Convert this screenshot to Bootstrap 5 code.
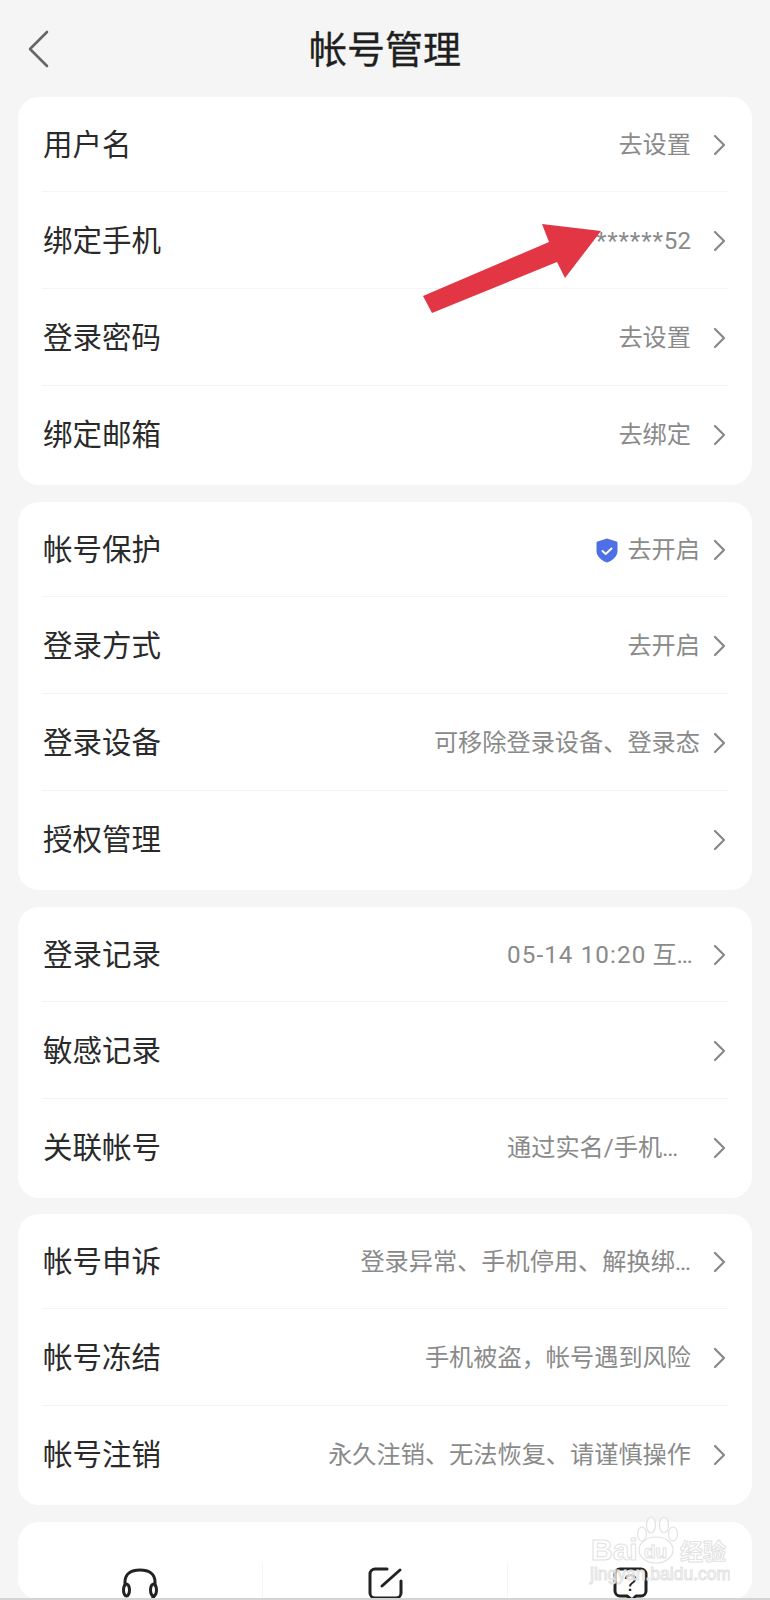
<!DOCTYPE html>
<html lang="zh-CN">
<head>
<meta charset="utf-8">
<title>帐号管理</title>
<link href="https://cdn.jsdelivr.net/npm/bootstrap@5.3.0/dist/css/bootstrap.min.css" rel="stylesheet">
<style>
html,body{height:1600px;overflow:hidden}
body{background:#f5f5f5;font-family:Roboto,"Noto Sans CJK SC",sans-serif;color:#2a2a2a;position:relative}
.top-bar{height:97px}
.back-slot{width:48px;padding-left:27px;box-sizing:content-box}
.page-title{font-size:38px;font-weight:400;color:#1f1f1f;line-height:1;padding-top:2px;-webkit-text-stroke:.3px #1f1f1f}
.panel{margin:0 18px 17px 18px;border-radius:21px;background:#fff}
.panel.tight{margin-bottom:16px}
.entry{margin:0 24px;padding:4px 0 0;height:97px;border-color:#f4f4f4;background:transparent}
.entry:first-child{height:95px}
.entry:last-child{height:99px;padding-bottom:3px}
.entry-label{font-size:29.5px;color:#2a2a2a;line-height:1;margin-left:1px}
.entry-value{font-size:24.2px;color:#8a8a8a;line-height:1;margin-right:22px;margin-bottom:2px;white-space:nowrap}
.wide .entry-value{margin-right:13px}
.clip-box{width:184px}
.num-run{letter-spacing:1.1px}
.star-run{letter-spacing:.9px}
.chev{width:13px;height:22px;flex:none;margin-right:2px;margin-bottom:2px}
.shield{width:22px;height:25px;margin-right:9px;margin-bottom:2px;flex:none}
.tool-col{flex:1 1 0;height:37px;border-left:1px solid #f5f5f5;display:flex;justify-content:center;align-items:flex-start}
.tool-col:first-child{border-left:0}
.tool-row{padding-top:41px}
.edge-line{position:absolute;left:0;right:0;bottom:0;height:2px;background:#d4d4d4}
.pointer{position:absolute;left:420px;top:220px;width:190px;height:100px}
.stamp{position:absolute;left:588px;top:1514px;width:142px;height:72px;pointer-events:none}
.stamp text{fill:#fff;fill-opacity:.55;stroke:#e2e2e2;stroke-width:1}
.stamp .paw{fill:#fff;fill-opacity:.55;stroke:#e2e2e2;stroke-width:1.2}
</style>
</head>
<body>
<header class="top-bar d-flex align-items-center">
  <div class="back-slot">
    <svg width="22" height="38" viewBox="0 0 22 38" fill="none" stroke="#666" stroke-width="2.6" stroke-linecap="round" stroke-linejoin="round"><path d="M20 2 3 19l17 17"/></svg>
  </div>
  <div class="page-title flex-grow-1 text-center">帐号管理</div>
  <div class="back-slot"></div>
</header>

<section class="card border-0 panel">
  <ul class="list-group list-group-flush">
    <li class="list-group-item entry d-flex align-items-center"><span class="entry-label me-auto">用户名</span><span class="entry-value">去设置</span><svg class="chev" viewBox="0 0 13 22" fill="none" stroke="#888" stroke-width="2.2" stroke-linecap="round" stroke-linejoin="round"><path d="M2 2l9 9-9 9"/></svg></li>
    <li class="list-group-item entry d-flex align-items-center"><span class="entry-label me-auto">绑定手机</span><span class="entry-value"><span class="star-run">*******</span>52</span><svg class="chev" viewBox="0 0 13 22" fill="none" stroke="#888" stroke-width="2.2" stroke-linecap="round" stroke-linejoin="round"><path d="M2 2l9 9-9 9"/></svg></li>
    <li class="list-group-item entry d-flex align-items-center"><span class="entry-label me-auto">登录密码</span><span class="entry-value">去设置</span><svg class="chev" viewBox="0 0 13 22" fill="none" stroke="#888" stroke-width="2.2" stroke-linecap="round" stroke-linejoin="round"><path d="M2 2l9 9-9 9"/></svg></li>
    <li class="list-group-item entry d-flex align-items-center"><span class="entry-label me-auto">绑定邮箱</span><span class="entry-value">去绑定</span><svg class="chev" viewBox="0 0 13 22" fill="none" stroke="#888" stroke-width="2.2" stroke-linecap="round" stroke-linejoin="round"><path d="M2 2l9 9-9 9"/></svg></li>
  </ul>
</section>

<section class="card border-0 panel wide">
  <ul class="list-group list-group-flush">
    <li class="list-group-item entry d-flex align-items-center"><span class="entry-label me-auto">帐号保护</span><svg class="shield" viewBox="0 0 22 25"><path d="M11 .5 20.5 3.5c.6.2 1 .7 1 1.300V13c0 5.500-5 9.500-10.500 11.500C5.500 22.500.5 18.500.5 13V4.800c0-.6.4-1.100 1-1.300z" fill="#4f6fe6"/><path d="M6.500 13l3.200 3 5.800-5.500" fill="none" stroke="#fff" stroke-width="1.900" stroke-linecap="round" stroke-linejoin="round"/></svg><span class="entry-value">去开启</span><svg class="chev" viewBox="0 0 13 22" fill="none" stroke="#888" stroke-width="2.2" stroke-linecap="round" stroke-linejoin="round"><path d="M2 2l9 9-9 9"/></svg></li>
    <li class="list-group-item entry d-flex align-items-center"><span class="entry-label me-auto">登录方式</span><span class="entry-value">去开启</span><svg class="chev" viewBox="0 0 13 22" fill="none" stroke="#888" stroke-width="2.2" stroke-linecap="round" stroke-linejoin="round"><path d="M2 2l9 9-9 9"/></svg></li>
    <li class="list-group-item entry d-flex align-items-center"><span class="entry-label me-auto">登录设备</span><span class="entry-value">可移除登录设备、登录态</span><svg class="chev" viewBox="0 0 13 22" fill="none" stroke="#888" stroke-width="2.2" stroke-linecap="round" stroke-linejoin="round"><path d="M2 2l9 9-9 9"/></svg></li>
    <li class="list-group-item entry d-flex align-items-center"><span class="entry-label me-auto">授权管理</span><svg class="chev" viewBox="0 0 13 22" fill="none" stroke="#888" stroke-width="2.2" stroke-linecap="round" stroke-linejoin="round"><path d="M2 2l9 9-9 9"/></svg></li>
  </ul>
</section>

<section class="card border-0 panel tight">
  <ul class="list-group list-group-flush">
    <li class="list-group-item entry d-flex align-items-center"><span class="entry-label me-auto">登录记录</span><span class="entry-value clip-box"><span class="num-run">05-14 10:20</span> 互…</span><svg class="chev" viewBox="0 0 13 22" fill="none" stroke="#888" stroke-width="2.2" stroke-linecap="round" stroke-linejoin="round"><path d="M2 2l9 9-9 9"/></svg></li>
    <li class="list-group-item entry d-flex align-items-center"><span class="entry-label me-auto">敏感记录</span><svg class="chev" viewBox="0 0 13 22" fill="none" stroke="#888" stroke-width="2.2" stroke-linecap="round" stroke-linejoin="round"><path d="M2 2l9 9-9 9"/></svg></li>
    <li class="list-group-item entry d-flex align-items-center"><span class="entry-label me-auto">关联帐号</span><span class="entry-value clip-box">通过实名/手机…</span><svg class="chev" viewBox="0 0 13 22" fill="none" stroke="#888" stroke-width="2.2" stroke-linecap="round" stroke-linejoin="round"><path d="M2 2l9 9-9 9"/></svg></li>
  </ul>
</section>

<section class="card border-0 panel">
  <ul class="list-group list-group-flush">
    <li class="list-group-item entry d-flex align-items-center"><span class="entry-label me-auto">帐号申诉</span><span class="entry-value">登录异常、手机停用、解换绑…</span><svg class="chev" viewBox="0 0 13 22" fill="none" stroke="#888" stroke-width="2.2" stroke-linecap="round" stroke-linejoin="round"><path d="M2 2l9 9-9 9"/></svg></li>
    <li class="list-group-item entry d-flex align-items-center"><span class="entry-label me-auto">帐号冻结</span><span class="entry-value">手机被盗，帐号遇到风险</span><svg class="chev" viewBox="0 0 13 22" fill="none" stroke="#888" stroke-width="2.2" stroke-linecap="round" stroke-linejoin="round"><path d="M2 2l9 9-9 9"/></svg></li>
    <li class="list-group-item entry d-flex align-items-center"><span class="entry-label me-auto">帐号注销</span><span class="entry-value">永久注销、无法恢复、请谨慎操作</span><svg class="chev" viewBox="0 0 13 22" fill="none" stroke="#888" stroke-width="2.2" stroke-linecap="round" stroke-linejoin="round"><path d="M2 2l9 9-9 9"/></svg></li>
  </ul>
</section>

<section class="card border-0 panel flex-row tool-row">
  <div class="tool-col">
    <svg width="40" height="40" viewBox="0 0 40 40" fill="none" stroke="#222" stroke-width="3" stroke-linecap="round"><path d="M5 22V19C5 11 11 7 20 7s15 4 15 12v3"/><ellipse cx="6.500" cy="27" rx="3" ry="6"/><ellipse cx="33.500" cy="27" rx="3" ry="6"/><path d="M34 33c-1 3-4 5-8 5"/></svg>
  </div>
  <div class="tool-col">
    <svg width="36" height="36" viewBox="0 0 36 36" fill="none" stroke="#222" stroke-width="3" stroke-linecap="round" stroke-linejoin="round"><path d="M20 6H8a5 5 0 0 0-5 5v19a5 5 0 0 0 5 5h21a5 5 0 0 0 5-5V18"/><path d="M33 7 15 23"/></svg>
  </div>
  <div class="tool-col">
    <svg width="36" height="38" viewBox="0 0 36 38" fill="none" stroke="#222" stroke-width="3" stroke-linejoin="round"><path d="M8 6h21a5 5 0 0 1 5 5v17a5 5 0 0 1-5 5h-5l-4 4-5-4H8a5 5 0 0 1-5-5V11a5 5 0 0 1 5-5z"/><text x="18.500" y="28" text-anchor="middle" font-family="Liberation Sans, sans-serif" font-size="23" fill="#222" stroke="none">?</text></svg>
  </div>
</section>

<svg class="pointer" viewBox="0 0 190 100"><polygon points="3,76 129,22 122,4 181,11 145,58 137,42 12,93" fill="#e23645"/></svg>

<svg class="stamp" viewBox="0 0 142 72">
  <text x="3" y="46" font-family="Liberation Sans, sans-serif" font-size="30" font-weight="700">Bai</text>
  <ellipse class="paw" cx="68" cy="36" rx="17" ry="13"/>
  <ellipse class="paw" cx="54" cy="20" rx="4.500" ry="7"/>
  <ellipse class="paw" cx="63" cy="11" rx="4.500" ry="8"/>
  <ellipse class="paw" cx="76" cy="11" rx="4.500" ry="8"/>
  <ellipse class="paw" cx="85" cy="20" rx="4.500" ry="7"/>
  <text x="56" y="44" font-family="Liberation Sans, sans-serif" font-size="19" font-weight="700">du</text>
  <text x="92" y="46" font-family="Noto Sans CJK SC, sans-serif" font-size="23" font-weight="700">经验</text>
  <text x="2" y="66" font-family="Liberation Sans, sans-serif" font-size="17.500">jingyan.baidu.com</text>
</svg>

<div class="edge-line"></div>
<script src="https://cdn.jsdelivr.net/npm/bootstrap@5.3.0/dist/js/bootstrap.bundle.min.js"></script>
</body>
</html>
